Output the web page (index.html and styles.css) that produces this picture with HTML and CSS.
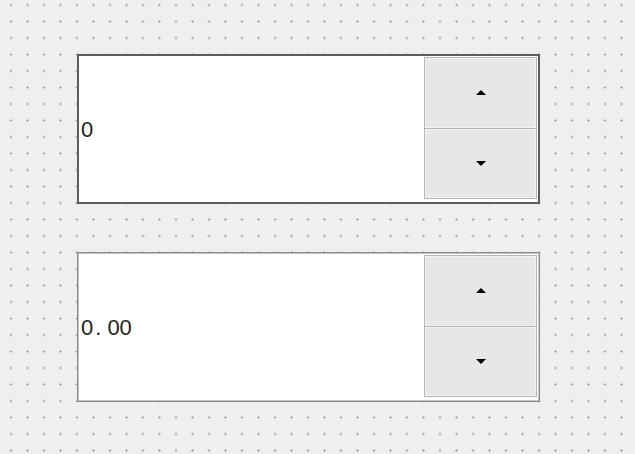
FILE: index.html
```html
<!DOCTYPE html>
<html lang="en">
<head>
  <meta charset="UTF-8">
  <meta name="viewport" content="width=device-width, initial-scale=1.0">
  <title>Spin Boxes</title>
  <link rel="stylesheet" href="styles.css">
</head>
<body>
  <div class="canvas">
    <div class="spinbox focused">
      <div class="value">0</div>
      <div class="buttons">
        <button class="step"><span class="arrow up"></span></button>
        <button class="step"><span class="arrow down"></span></button>
      </div>
    </div>
    <div class="spinbox">
      <div class="value">0<span class="dot">.</span>00</div>
      <div class="buttons">
        <button class="step"><span class="arrow up"></span></button>
        <button class="step"><span class="arrow down"></span></button>
      </div>
    </div>
  </div>
</body>
</html>
```

FILE: styles.css
```css
html, body {
  margin: 0;
  height: 100%;
}
body {
  background-color: #efefef;
  background-image: radial-gradient(circle, #9c9c9c 0.8px, rgba(156, 156, 156, 0) 1.4px);
  background-size: 16.5px 16.5px;
  background-position: 2.75px -3.25px;
  font-family: "Liberation Sans", sans-serif;
}
.canvas {
  display: flex;
  flex-direction: column;
  gap: 48px;
  padding: 54px 0 0 77px;
}
.spinbox {
  display: flex;
  width: 459px;
  height: 146px;
  background: #fff;
  border: 1px solid #8a8a8a;
  box-shadow: inset 0 0 0 1px #c4c4c4;
  padding: 1px;
  box-sizing: content-box;
}
.spinbox.focused {
  border: 2px solid #5c5c5c;
  box-shadow: none;
  padding: 0;
}
.value {
  flex: 1;
  display: flex;
  align-items: center;
  padding: 2px 0 0 2px;
  font-size: 22px;
  color: #222;
}
.value .dot {
  margin: 0 6px 0 2px;
}
.buttons {
  display: flex;
  flex-direction: column;
  width: 113px;
  margin: 1px 1px 3px 0;
}
.step {
  flex: 1;
  display: flex;
  align-items: center;
  justify-content: center;
  padding: 0;
  background: #e7e7e7;
  border: 1px solid #b6b6b6;
  box-shadow: inset 0 0 0 1px #f2f2f2;
}
.step + .step {
  border-top: none;
}
.arrow {
  width: 0;
  height: 0;
  border-left: 5px solid transparent;
  border-right: 5px solid transparent;
}
.arrow.up {
  border-bottom: 5px solid #000;
}
.arrow.down {
  border-top: 5px solid #000;
}
```
